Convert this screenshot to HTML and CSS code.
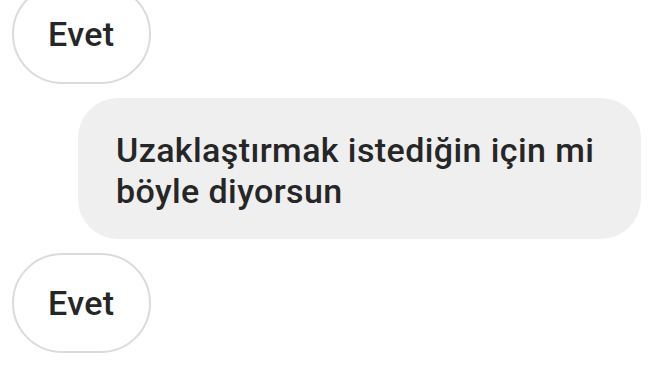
FILE: index.html
```html
<!DOCTYPE html>
<html>
<head>
  <meta charset="utf-8">
  <meta name="viewport" content="width=device-width, initial-scale=1">
  <link rel="stylesheet" href="styles.css">
</head>
<body>
  <div class="thread">
    <div class="msg msg-out">Evet</div>
    <div class="msg msg-in">Uzaklaştırmak istediğin için mi böyle diyorsun</div>
    <div class="msg msg-out">Evet</div>
  </div>
</body>
</html>
```
FILE: styles.css
```css
/* Base */
body {
  margin: 0;
  background: #fff;
  font-family: Roboto, "Liberation Sans", sans-serif;
  color: #262626;
  overflow: hidden;
}

.thread {
  display: flex;
  flex-direction: column;
  gap: 14px;
  margin-top: -16px;
  padding: 0 31px 0 12px;
}

/* Message bubbles */
.msg {
  font-size: 34px;
  font-weight: 500;
  line-height: 41px;
  letter-spacing: 0.4px;
}

.msg-out {
  align-self: flex-start;
  border: 2px solid #dbdbdb;
  border-radius: 50px;
  padding: 28px 34px 27px;
}

.msg-in {
  align-self: flex-end;
  width: 487px;
  background: #efefef;
  border-radius: 40px;
  padding: 32px 38px 27px;
}
```
